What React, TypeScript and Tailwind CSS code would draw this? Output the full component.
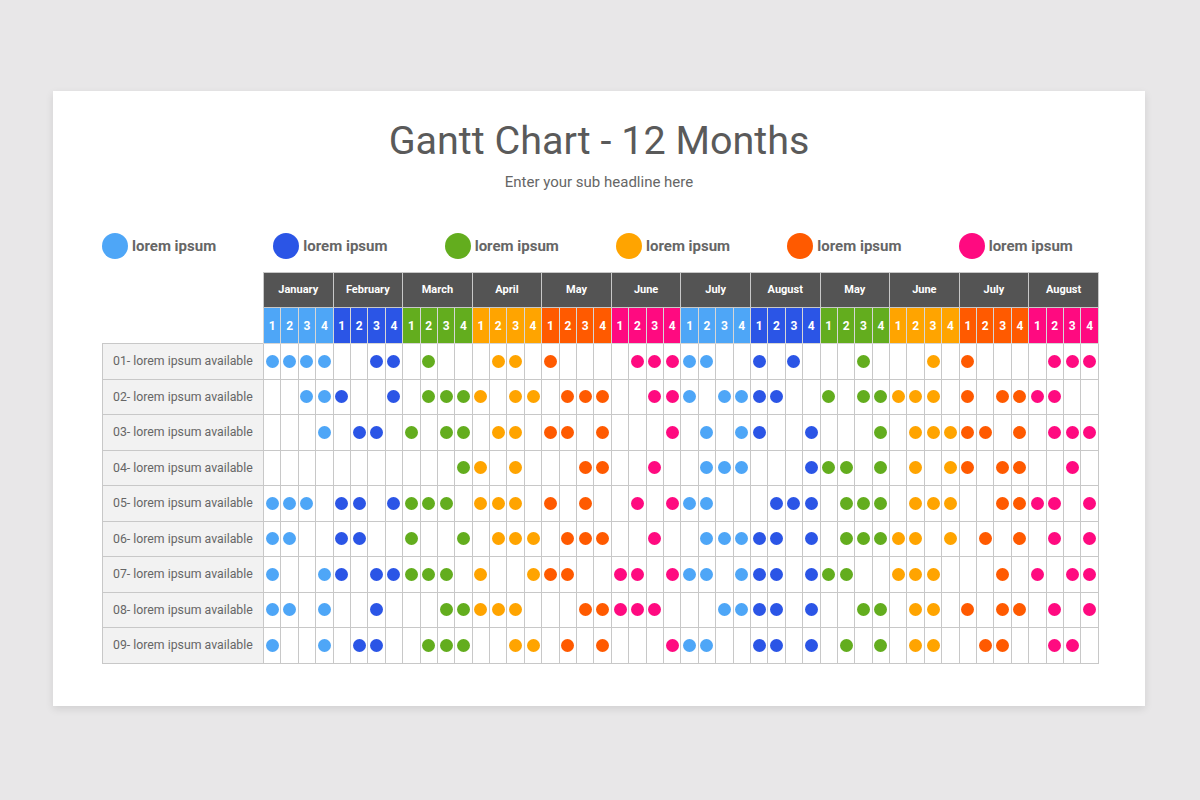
import React from "react";

const COLORS = ["#4ea6f7", "#2b55e6", "#63ad1e", "#ffa400", "#ff5a00", "#ff0a80"];
const MONTHS = ["January", "February", "March", "April", "May", "June", "July", "August", "May", "June", "July", "August"];

const ROWS: number[][] = [
  [0, 1, 2, 3, 6, 7, 9, 13, 14, 16, 21, 22, 23, 24, 25, 28, 30, 34, 38, 40, 45, 46, 47],
  [2, 3, 4, 7, 9, 10, 11, 12, 14, 15, 17, 18, 19, 22, 23, 24, 26, 27, 28, 29, 32, 34, 35, 36, 37, 38, 40, 42, 43, 44, 45],
  [3, 5, 6, 8, 10, 11, 13, 14, 16, 17, 19, 23, 25, 27, 28, 31, 35, 37, 38, 39, 40, 41, 43, 45, 46, 47],
  [11, 12, 14, 18, 19, 22, 25, 26, 27, 31, 32, 33, 35, 37, 39, 40, 42, 43, 46],
  [0, 1, 2, 4, 5, 7, 8, 9, 10, 12, 13, 14, 16, 18, 21, 23, 24, 25, 29, 30, 31, 33, 34, 35, 37, 38, 39, 42, 43, 44, 45, 47],
  [0, 1, 4, 5, 8, 11, 13, 14, 15, 17, 18, 19, 22, 25, 26, 27, 28, 29, 31, 33, 34, 35, 36, 37, 39, 41, 43, 45, 47],
  [0, 3, 4, 6, 7, 8, 9, 10, 12, 15, 16, 17, 20, 21, 23, 24, 25, 27, 28, 29, 31, 32, 33, 36, 37, 38, 42, 44, 46, 47],
  [0, 1, 3, 6, 10, 11, 12, 13, 14, 18, 19, 20, 21, 22, 26, 27, 28, 29, 31, 34, 35, 37, 38, 40, 42, 43, 45, 47],
  [0, 3, 5, 6, 9, 10, 11, 14, 15, 17, 19, 23, 24, 25, 28, 29, 31, 33, 35, 37, 38, 41, 42, 45, 46],
];

const colorOf = (col: number) => COLORS[Math.floor(col / 4) % 6];

export default function App() {
  const cols = Array.from({ length: 48 }, (_, i) => i);
  return (
    <div
      className="min-h-screen w-full bg-[#e8e7e8] pt-[91px]"
      style={{ fontFamily: "Roboto, 'Liberation Sans', sans-serif" }}
    >
      <div className="ml-[53px] h-[615px] w-[1092px] bg-white pt-[27px] shadow-[0_3px_8px_rgba(0,0,0,0.10)]">
        <h1 className="text-center text-[39.5px] leading-[46px] font-normal text-[#5a5a5a]">
          Gantt Chart - 12 Months
        </h1>
        <p className="mt-[8px] text-center text-[15px] leading-[20px] text-[#666666]">
          Enter your sub headline here
        </p>
        <div className="ml-[49px] mt-[41px] grid w-[1028px] grid-cols-6">
          {COLORS.map((c) => (
            <div key={c} className="flex items-center gap-[4px]">
              <span className="block h-[26px] w-[26px] rounded-full" style={{ backgroundColor: c }} />
              <span className="text-[15px] font-bold leading-[26px] text-[#666666]">lorem ipsum</span>
            </div>
          ))}
        </div>
        <div className="ml-[49px] mt-[13px]">
          <table className="w-[997px] table-fixed border-collapse">
            <colgroup>
              <col className="w-[161px]" />
              {cols.map((i) => (
                <col key={i} />
              ))}
            </colgroup>
            <thead>
              <tr className="h-[35px]">
                <th rowSpan={2} className="bg-white p-0" />
                {MONTHS.map((m, i) => (
                  <th
                    key={i}
                    colSpan={4}
                    className="border border-[#c8c8c8] bg-[#545454] p-0 text-center text-[11px] font-bold text-white"
                  >
                    {m}
                  </th>
                ))}
              </tr>
              <tr className="h-[36px]">
                {cols.map((i) => (
                  <th
                    key={i}
                    className="border border-[#d6d6d6] p-0 text-center text-[12px] font-bold text-white"
                    style={{ backgroundColor: colorOf(i) }}
                  >
                    {(i % 4) + 1}
                  </th>
                ))}
              </tr>
            </thead>
            <tbody>
              {ROWS.map((row, r) => {
                const set = new Set(row);
                return (
                  <tr key={r} className="h-[35.5px]">
                    <td className="truncate border border-[#c8c8c8] bg-[#f2f2f2] p-0 pl-[10px] text-[12.3px] text-[#666666]">
                      {`0${r + 1}- lorem ipsum available`}
                    </td>
                    {cols.map((c) => (
                      <td key={c} className="border border-[#c8c8c8] bg-white p-0">
                        {set.has(c) && (
                          <span
                            className="mx-auto block h-[13px] w-[13px] rounded-full"
                            style={{ backgroundColor: colorOf(c) }}
                          />
                        )}
                      </td>
                    ))}
                  </tr>
                );
              })}
            </tbody>
          </table>
        </div>
      </div>
    </div>
  );
}
